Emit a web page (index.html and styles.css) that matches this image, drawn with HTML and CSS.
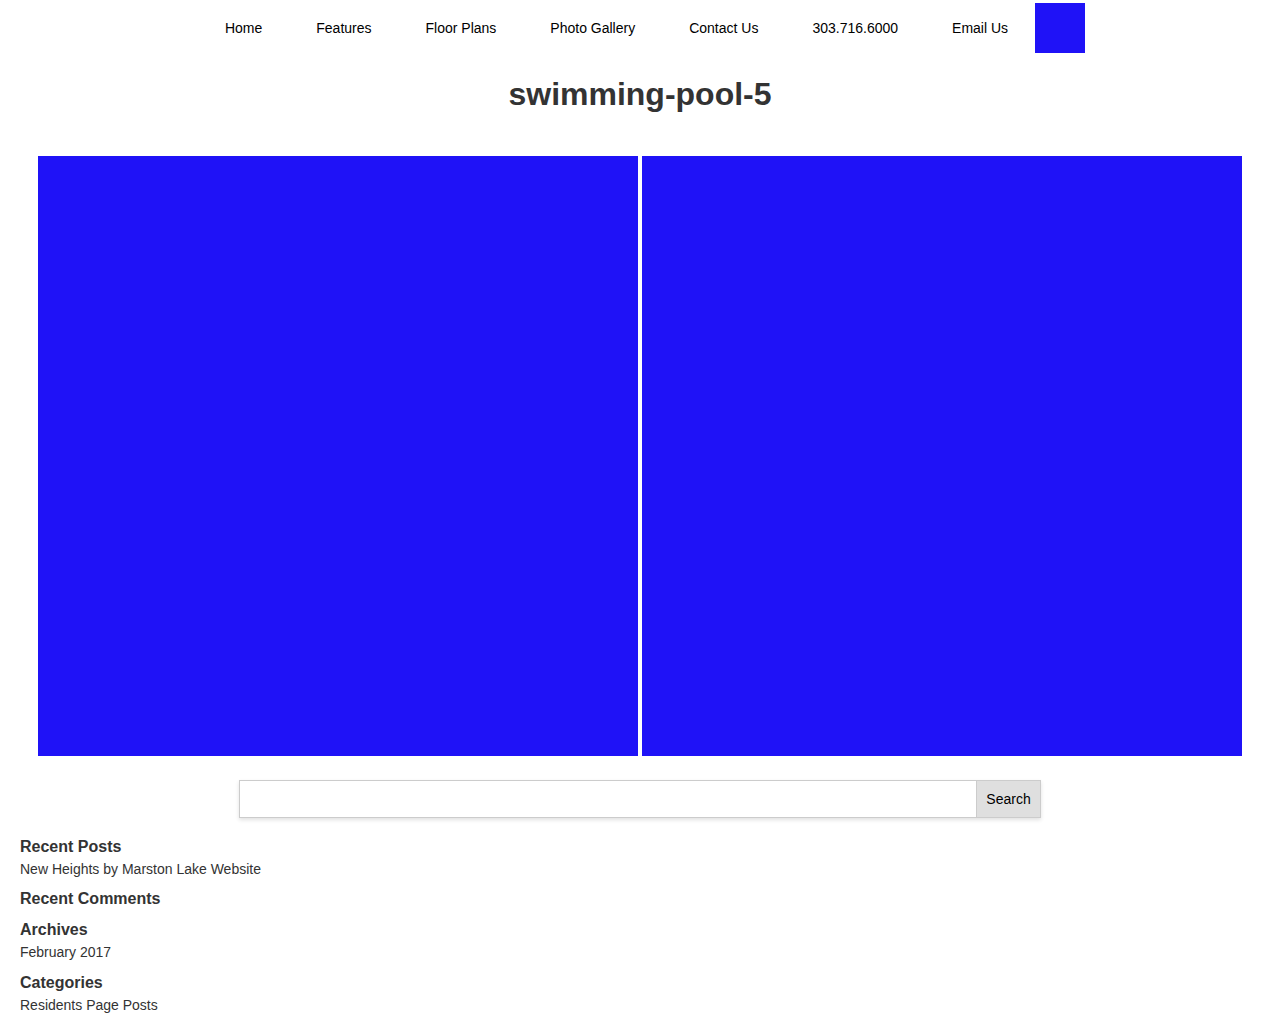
FILE: index.html
```html
<!DOCTYPE html>
<html lang="en">
<head>
<meta charset="utf-8">
<title>swimming-pool-5</title>
<link rel="stylesheet" href="styles.css">
</head>
<body>
<header class="site-header">
  <nav class="main-nav">
    <a class="nav-link" href="#">Home</a>
    <a class="nav-link" href="#">Features</a>
    <a class="nav-link" href="#">Floor Plans</a>
    <a class="nav-link" href="#">Photo Gallery</a>
    <a class="nav-link" href="#">Contact Us</a>
    <a class="nav-link" href="#">303.716.6000</a>
    <a class="nav-link nav-link-last" href="#">Email Us</a>
    <span class="nav-logo"></span>
  </nav>
</header>
<main class="content">
  <h1 class="page-title">swimming-pool-5</h1>
  <div class="gallery">
    <div class="photo"></div>
    <div class="photo"></div>
  </div>
  <form class="search-form">
    <input class="search-input" type="text" aria-label="Search">
    <button class="search-button" type="button">Search</button>
  </form>
</main>
<aside class="sidebar">
  <section class="widget">
    <h2 class="widget-title">Recent Posts</h2>
    <ul class="widget-list"><li>New Heights by Marston Lake Website</li></ul>
  </section>
  <section class="widget widget-empty">
    <h2 class="widget-title">Recent Comments</h2>
  </section>
  <section class="widget widget-archives">
    <h2 class="widget-title">Archives</h2>
    <ul class="widget-list"><li>February 2017</li></ul>
  </section>
  <section class="widget">
    <h2 class="widget-title">Categories</h2>
    <ul class="widget-list"><li>Residents Page Posts</li></ul>
  </section>
</aside>
</body>
</html>
```
FILE: styles.css
```css
* { box-sizing: border-box; }
html, body { margin: 0; padding: 0; background: #fff; }
body {
  font-family: "Liberation Sans", Arial, sans-serif;
  color: #333;
}
.site-header { height: 56px; }
.main-nav {
  display: flex;
  justify-content: center;
  align-items: center;
  height: 56px;
  padding-left: 6px;
}
.nav-link {
  padding: 0 27px;
  font-size: 14px;
  line-height: 20px;
  color: #000;
  text-decoration: none;
}
.nav-link-last { padding-right: 24px; }
.nav-logo {
  display: block;
  width: 50px;
  height: 50px;
  margin: 3px;
  background: #1f12f7;
}
.content { text-align: center; }
.page-title {
  margin: 20px 0 43px;
  font-size: 32px;
  line-height: 37px;
  font-weight: bold;
  color: #333;
}
.gallery {
  display: flex;
  justify-content: center;
  gap: 4px;
}
.photo {
  width: 600px;
  height: 600px;
  background: #1f12f7;
}
.search-form {
  display: flex;
  width: 802px;
  height: 38px;
  margin: 24px auto 0;
  border: 1px solid #ccc;
  box-shadow: 0 2px 4px rgba(0,0,0,0.12);
}
.search-input {
  flex: 1;
  border: 0;
  margin: 0;
  padding: 0 8px;
  background: #fff;
  font: 14px "Liberation Sans", Arial, sans-serif;
}
.search-button {
  width: 64px;
  border: 0;
  border-left: 1px solid #ccc;
  margin: 0;
  padding: 0;
  background: #dfdfdf;
  color: #000;
  font: 14px "Liberation Sans", Arial, sans-serif;
}
.sidebar {
  padding: 19px 20px 0;
}
.widget { margin-bottom: 9.5px; }
.widget-empty { margin-bottom: 11px; }
.widget-archives { margin-bottom: 11.5px; }
.widget-title {
  margin: 0;
  font-size: 16px;
  line-height: 20px;
  font-weight: bold;
  color: #333;
}
.widget-list {
  list-style: none;
  margin: 2px 0 0;
  padding: 0;
  font-size: 14px;
  line-height: 20px;
  color: #333;
}
```
